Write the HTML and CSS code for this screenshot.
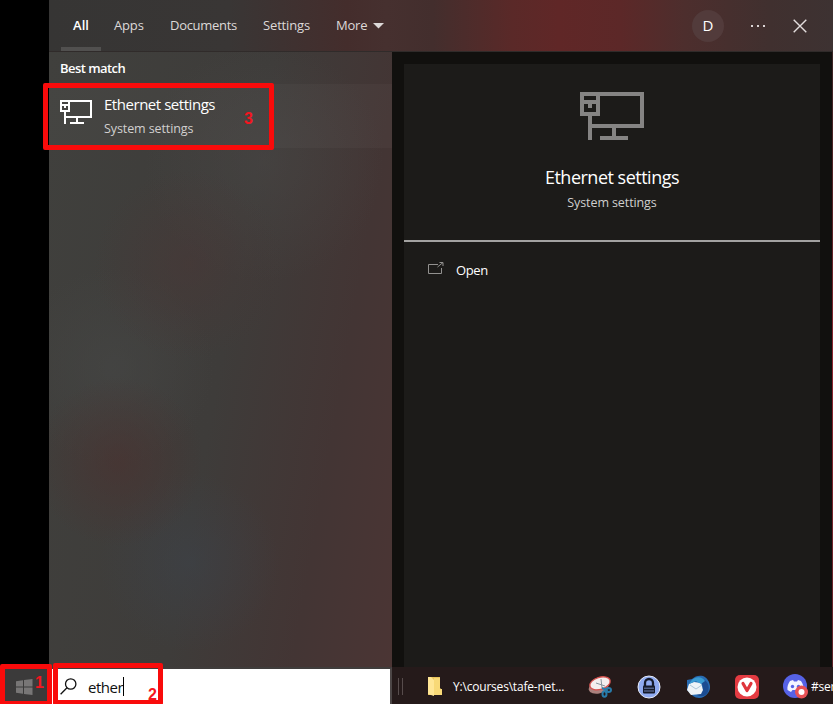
FILE: index.html
```html
<!DOCTYPE html>
<html lang="en">
<head>
<meta charset="utf-8">
<title>Search</title>
<link rel="stylesheet" href="styles.css">
</head>
<body>
<svg class="defs" aria-hidden="true">
  <symbol id="ethernet" viewBox="0 0 32 24">
    <path fill="currentColor" fill-rule="evenodd" d="M0 0H32V18H18V22H24V24H10V22H16V18H6V24H4V12H0ZM10 2V12H6V16H30V2ZM2 2V4H8V2ZM2 6V10H8V6H6V8H4V6Z"/>
  </symbol>
</svg>
<div class="desktop">
  <main class="search">
    <header class="tabs">
      <nav class="tab-list">
        <a class="tab active"><span class="t-all">All</span></a>
        <a class="tab apps">Apps</a>
        <a class="tab documents">Documents</a>
        <a class="tab settings">Settings</a>
        <a class="tab more">More<svg width="11" height="6" viewBox="0 0 11 6"><path d="M0 0H11L5.5 5.5Z" fill="#ddd9d8"/></svg></a>
      </nav>
      <div class="avatar">D</div>
      <svg class="dots" width="16" height="4" viewBox="0 0 16 4"><path d="M1 1h2v2H1zM7 1h2v2H7zM13 1h2v2h-2z" fill="#dcd5d5"/></svg>
      <svg class="close" width="14" height="14" viewBox="0 0 14 14"><path d="M.7.7 13.3 13.3M13.3.7.7 13.3" stroke="#e3dddd" stroke-width="1.4"/></svg>
    </header>
    <div class="content">
      <section class="results">
        <h2>Best match</h2>
        <div class="result">
          <svg class="result-icon" width="32" height="24"><use href="#ethernet"/></svg>
          <div class="result-text">
            <div class="result-title">Ethernet settings</div>
            <div class="result-sub">System settings</div>
          </div>
          <div class="mark mark-3"><span>3</span></div>
        </div>
      </section>
      <section class="preview">
        <div class="card">
          <div class="hero">
            <svg width="64" height="48"><use href="#ethernet"/></svg>
            <h1>Ethernet settings</h1>
            <p>System settings</p>
          </div>
          <div class="action">
            <svg width="16" height="12" viewBox="0 0 16 12" fill="none" stroke="#92918f"><path d="M10 2.5H.5V11.500H13.500V6M9.500 5 15 .5M11.500.5H15V4"/></svg>
            <span>Open</span>
          </div>
        </div>
      </section>
    </div>
  </main>
  <footer class="taskbar">
    <div class="start">
      <svg width="17" height="16" viewBox="0 0 17 16"><path fill="#787676" d="M0 2.300 7 1.300V7.500H0ZM8 1.100 16.500 0V7.500H8ZM0 8.500H7V14.700L0 13.700ZM8 8.500H16.500V16L8 14.900Z"/></svg>
      <div class="mark mark-1"><span>1</span></div>
    </div>
    <div class="query">
      <svg width="17" height="17" viewBox="0 0 17 17" fill="none" stroke="#111" stroke-width="1.300"><circle cx="10.700" cy="6" r="5.200"/><path d="M7 9.800.6 16.200"/></svg>
      <span class="query-text">ether</span><i class="caret"></i>
      <div class="mark mark-2"><span>2</span></div>
    </div>
    <div class="apps-row">
      <i class="grip"></i>
      <div class="folder">
        <svg width="15" height="19" viewBox="0 0 15 19"><path d="M0 0H12V11L14 13V18H0Z" fill="#e9c45c"/><path d="M0 0H3L6 3V19L0 17Z" fill="#ffe695"/><path d="M6 1H12V12H14V18H6Z" fill="#f8d977"/></svg>
        <span>Y:\courses\tafe-net...</span>
      </div>
      <svg class="app-icon snip" width="24" height="24" viewBox="0 0 24 24"><ellipse cx="10.500" cy="12.500" rx="10" ry="6" transform="rotate(-14 10.500 12.500)" fill="#aa817d"/><ellipse cx="12" cy="8.300" rx="10.500" ry="6" transform="rotate(-17 12 8.300)" fill="#f4eeee" stroke="#d6514e" stroke-width="1.300"/><path d="m8 8 9 3M13 4l1 9" stroke="#87949c" stroke-width="1"/><g fill="none" stroke="#287ba9" stroke-width="2"><ellipse cx="20.500" cy="15" rx="2.500" ry="2"/><ellipse cx="16.500" cy="19" rx="2" ry="2.800"/><path d="m14 13 5 2-2 2"/></g></svg>
      <svg class="app-icon lock" width="24" height="24" viewBox="0 0 24 24"><circle cx="12" cy="12" r="11" fill="#8faaf0" stroke="#e5e9f5" stroke-width="1"/><path d="M8 11V8a4 4 0 0 1 8 0v3" fill="none" stroke="#151a2a" stroke-width="2.300"/><rect x="6" y="10.500" width="12" height="8" rx="1" fill="#151a2a"/><path d="M7 13.200h10M7 16h10" stroke="#859bd2" stroke-width=".8"/></svg>
      <svg class="app-icon bird" width="24" height="24" viewBox="0 0 24 24"><path d="M1 5 6 4C9 1 13 0 17 1 24 4 26 13 22 18 18 24 11 24 7 21L1 15Z" fill="#286bb2"/><path d="M14 3C22 5 24 11 22 17 19 22 15 22 11 20L17 12Z" fill="#1b4c91"/><path d="M3 9 8 7 15 8 17 15 15 19 5 20 1 15Z" fill="#edf3f7"/><path d="m4 10 6 4 6-4" fill="none" stroke="#aec6d9"/><path d="M5 6C9 1 16 1 19 6L15 9 10 6 3 9Z" fill="#399bd2"/></svg>
      <svg class="app-icon vivaldi" width="24" height="24" viewBox="0 0 24 24"><rect width="24" height="24" rx="5" fill="#e43b42"/><circle cx="12" cy="12" r="9.500" fill="#fff"/><path d="M8 8.500 12 15.500 16 8.500" fill="none" stroke="#df353c" stroke-width="3.200" stroke-linecap="round" stroke-linejoin="round"/></svg>
      <svg class="app-icon discord" width="26" height="25" viewBox="0 0 26 25"><circle cx="12" cy="12" r="12" fill="#5662e6"/><path d="M7 7 10 6 11 7.500H14L15 6 18 7C20 10 21 13 20.500 16L17 18 15.500 16H9.500L8 18 4.500 16C4 13 5 10 7 7Z" fill="#f2f4ff"/><circle cx="9.500" cy="12.500" r="1.700" fill="#5662e6"/><circle cx="15.500" cy="12.500" r="1.700" fill="#5662e6"/><circle cx="18.500" cy="18" r="6.500" fill="#e85256"/><circle cx="18.500" cy="18" r="3" fill="#fff"/></svg>
      <span class="channel">#server</span>
    </div>
  </footer>
</div>
</body>
</html>
```
FILE: styles.css
```css
* { box-sizing: border-box; }
body { margin: 0; background: #000; overflow: hidden; font-family: "Open Sans", "Noto Sans", sans-serif; color: #fff; }
h1, h2, p { margin: 0; font-weight: 400; }
svg { display: block; flex: none; }
.defs { display: none; }
.desktop { width: 833px; height: 704px; display: flex; flex-direction: column; overflow: hidden; }
.search { height: 667px; margin-left: 49px; display: flex; flex-direction: column; }

.tabs { height: 52px; flex: none; display: flex; align-items: center; padding-right: 26px; border-bottom: 1px solid #302b2a; background: linear-gradient(90deg, #363534 0, #393635 23%, #442d2c 38%, #46302f 43%, #432e2d 49%, #5a2928 59%, #602727 65%, #5c2828 73%, #4d2e2d 81%, #40302f 92%, #3d3232 100%); }
.tab-list { flex: 1; display: flex; height: 51px; padding-left: 12px; line-height: 51px; font-size: 13px; color: #ddd9d8; white-space: nowrap; }
.tab.active { width: 40px; text-align: center; font-weight: 600; color: #fff; border-bottom: 4px solid #51504f; }
.apps { width: 56px; padding-left: 13px; letter-spacing: -.15px; }
.documents { width: 93px; padding-left: 13px; letter-spacing: -.3px; }
.settings { width: 73px; padding-left: 13px; letter-spacing: -.15px; }
.more { display: flex; align-items: center; gap: 6px; padding-left: 13px; letter-spacing: -.2px; }
.avatar { width: 32px; height: 32px; margin-right: 26px; border-radius: 50%; background: #523b3b; text-align: center; line-height: 31px; font-size: 15px; }
.dots { margin-right: 27px; }

.content { flex: 1; display: flex; background: linear-gradient(#3a2424, #5c2328 30%, #8e2630 50%, #5c2328); }
.results { width: 343px; background: radial-gradient(circle at 70px 410px, #4b312f99, transparent 85px), radial-gradient(circle at 140px 212px, #4b363577, transparent 95px), radial-gradient(circle at 140px 510px, #3d434b88, transparent 90px), radial-gradient(circle at 65px 315px, #46474699, transparent 100px), radial-gradient(circle at 215px 110px, #4b484777, transparent 120px), linear-gradient(100deg, #40403d 0, #3e3c3a 50%, #433534 78%, #4b3534 100%); }
h2 { height: 32px; padding-left: 11px; line-height: 33px; font-size: 13px; font-weight: 600; letter-spacing: -.55px; }
.result { position: relative; height: 64px; display: flex; padding-left: 11px; background: #ffffff07; }
.result-icon { margin-top: 16px; }
.result-text { margin-left: 12px; }
.result-title { margin-top: 8px; line-height: 24px; font-size: 15px; letter-spacing: -.46px; }
.result-sub { line-height: 26px; font-size: 12.500px; letter-spacing: -.1px; color: #d2d0cf; }

.preview { width: 440px; padding: 12px 12px 0; background: #11100e; }
.card { height: 603px; background: #1c1b19; }
.hero { height: 178px; display: flex; flex-direction: column; align-items: center; padding-top: 28px; border-bottom: 2px solid #a3a2a1; color: #858483; }
h1 { margin-top: 24px; line-height: 27px; font-size: 18px; letter-spacing: -.5px; color: #fff; }
p { margin-top: 2px; line-height: 20px; font-size: 12.500px; letter-spacing: -.1px; color: #cfcfce; }
.action { display: flex; align-items: flex-start; gap: 12px; padding: 20px 24px; }
.action span { margin-top: -1px; line-height: 18px; font-size: 13px; letter-spacing: -.4px; }

.taskbar { height: 37px; display: flex; background: #251a1a; }
.start { position: relative; width: 52px; padding: 12px 0 0 16px; background: #3b3a3a; }
.query { position: relative; width: 340px; display: flex; align-items: center; padding-left: 8px; border-top: 2px solid #403d3c; border-right: 2px solid #4c4646; background: #fff; color: #111; }
.query-text { margin-left: 11px; font-size: 15px; line-height: 20px; letter-spacing: -.5px; }
.caret { width: 1px; height: 19px; background: #000; }
.apps-row { flex: 1; display: flex; align-items: center; padding-top: 2px; min-width: 0; font-size: 12px; white-space: nowrap; overflow: hidden; }
.apps-row > * { flex: none; }
.grip { width: 5px; height: 17px; margin: 0 26px 0 6px; border: solid #574c4c; border-width: 0 1px; }
.folder { width: 160px; display: flex; align-items: center; gap: 10px; letter-spacing: -.2px; margin-left: -1px; }
.app-icon { margin-right: 25px; }
.app-icon.discord { margin: 0 2px 0 -1px; }
.channel { letter-spacing: -.2px; }

.mark { position: absolute; border: 5px solid #f90b0b; border-radius: 2px; color: #f51520; font: bold 16px/18px "Liberation Sans", sans-serif; }
.mark span { position: absolute; }
.mark-1 { left: 0; top: -3px; width: 52px; height: 42px; }
.mark-1 span { left: 30px; top: 5px; }
.mark-2 { left: 1px; top: -6px; width: 110px; height: 42px; }
.mark-2 span { left: 90px; top: 18px; }
.mark-3 { left: -6px; top: -1px; width: 231px; height: 67px; }
.mark-3 span { left: 196px; top: 22px; }
```
